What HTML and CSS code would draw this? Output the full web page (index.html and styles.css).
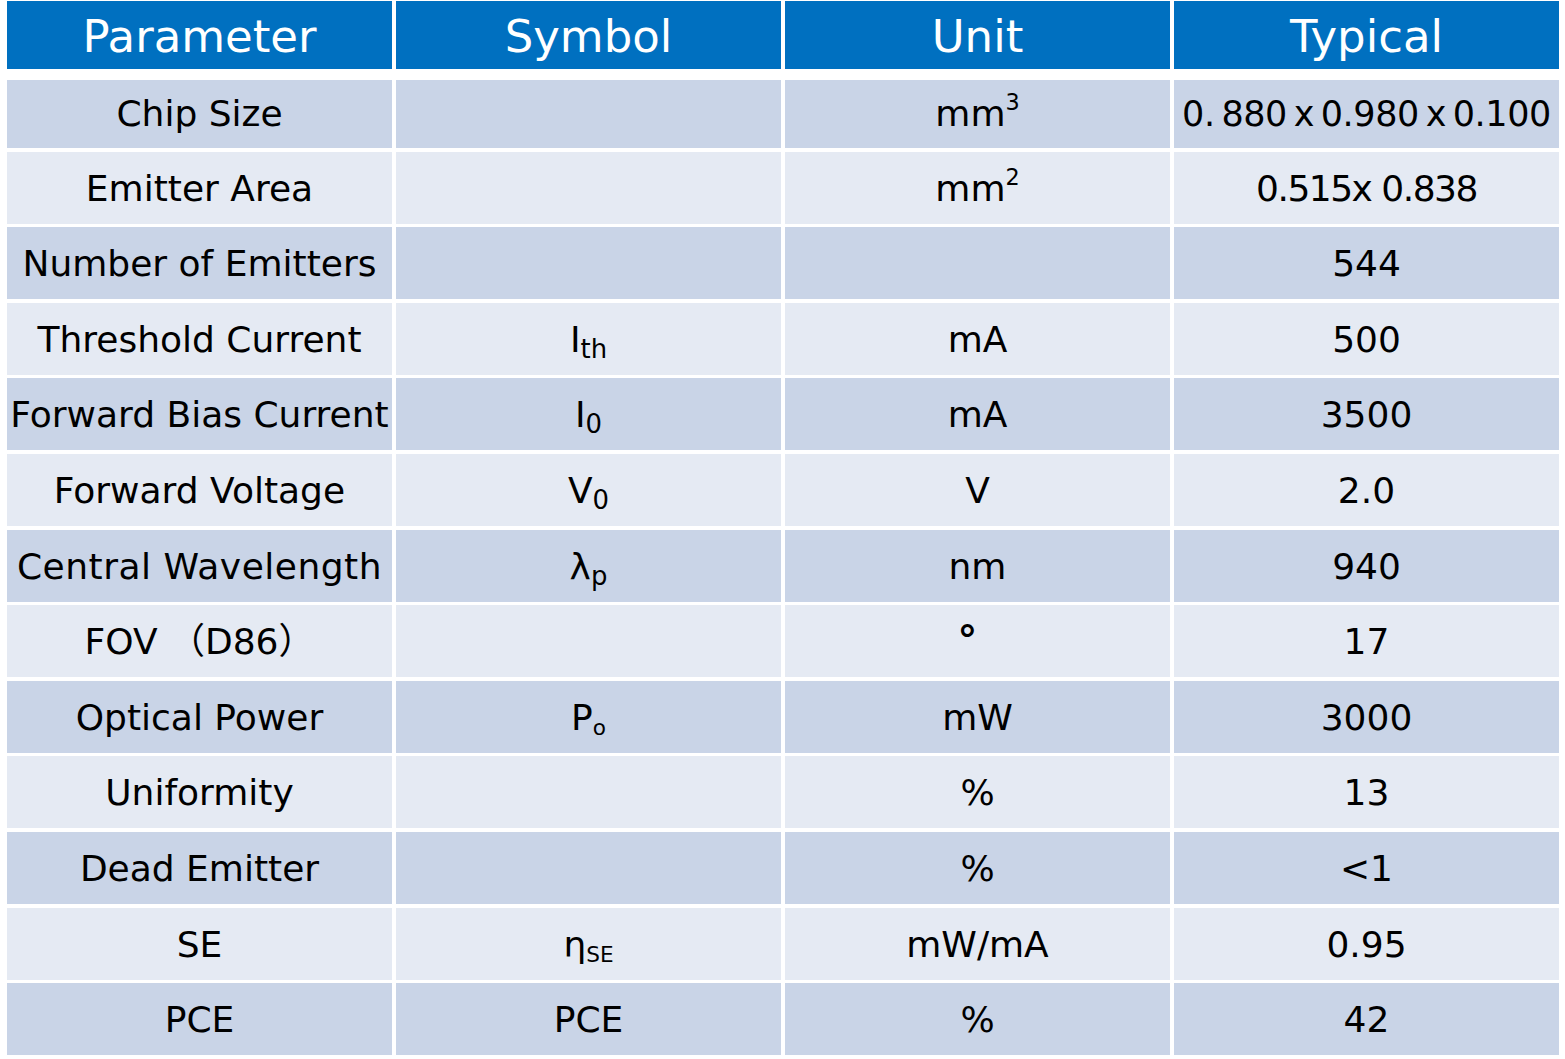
FILE: index.html
```html
<!DOCTYPE html>
<html>
<head>
<meta charset="utf-8">
<link rel="stylesheet" href="styles.css">
</head>
<body>
<div class="spec">
  <div class="row head">
    <div class="cell">Parameter</div>
    <div class="cell">Symbol</div>
    <div class="cell">Unit</div>
    <div class="cell">Typical</div>
  </div>
  <div class="row dark first">
    <div class="cell">Chip Size</div>
    <div class="cell"></div>
    <div class="cell">mm<sup>3</sup></div>
    <div class="cell tight">0. 880 x 0.980 x 0.100</div>
  </div>
  <div class="row light">
    <div class="cell">Emitter Area</div>
    <div class="cell"></div>
    <div class="cell">mm<sup>2</sup></div>
    <div class="cell narrow">0.515x 0.838</div>
  </div>
  <div class="row dark">
    <div class="cell">Number of Emitters</div>
    <div class="cell"></div>
    <div class="cell"></div>
    <div class="cell">544</div>
  </div>
  <div class="row light">
    <div class="cell">Threshold Current</div>
    <div class="cell">I<sub>th</sub></div>
    <div class="cell">mA</div>
    <div class="cell">500</div>
  </div>
  <div class="row dark">
    <div class="cell">Forward Bias Current</div>
    <div class="cell">I<sub>0</sub></div>
    <div class="cell">mA</div>
    <div class="cell">3500</div>
  </div>
  <div class="row light">
    <div class="cell">Forward Voltage</div>
    <div class="cell">V<sub>0</sub></div>
    <div class="cell">V</div>
    <div class="cell">2.0</div>
  </div>
  <div class="row dark">
    <div class="cell wide">Central Wavelength</div>
    <div class="cell">λ<sub>p</sub></div>
    <div class="cell">nm</div>
    <div class="cell">940</div>
  </div>
  <div class="row light">
    <div class="cell">FOV （D86）</div>
    <div class="cell"></div>
    <div class="cell"><span class="deg">°</span></div>
    <div class="cell">17</div>
  </div>
  <div class="row dark">
    <div class="cell">Optical Power</div>
    <div class="cell">P<sub class="small">o</sub></div>
    <div class="cell">mW</div>
    <div class="cell">3000</div>
  </div>
  <div class="row light">
    <div class="cell">Uniformity</div>
    <div class="cell"></div>
    <div class="cell">%</div>
    <div class="cell">13</div>
  </div>
  <div class="row dark">
    <div class="cell">Dead Emitter</div>
    <div class="cell"></div>
    <div class="cell">%</div>
    <div class="cell">&lt;1</div>
  </div>
  <div class="row light">
    <div class="cell">SE</div>
    <div class="cell">η<sub class="small">SE</sub></div>
    <div class="cell">mW/mA</div>
    <div class="cell">0.95</div>
  </div>
  <div class="row dark">
    <div class="cell">PCE</div>
    <div class="cell">PCE</div>
    <div class="cell">%</div>
    <div class="cell">42</div>
  </div>
</div>
</body>
</html>
```

FILE: styles.css
```css
html, body {
  margin: 0;
  padding: 0;
  background: #ffffff;
}

body {
  font-family: "DejaVu Sans", "Noto Sans CJK SC", sans-serif;
  color: #000000;
}

.spec {
  width: 1552px;
  padding: 1px 0 0 7px;
  display: flex;
  flex-direction: column;
  gap: 3.6px;
}

.row {
  display: grid;
  grid-template-columns: repeat(4, 1fr);
  column-gap: 4px;
  height: 72px;
}

.row.head {
  height: 68px;
  margin-bottom: 7.4px;
}

.row.first {
  height: 68px;
}

.cell {
  box-sizing: border-box;
  height: 100%;
  overflow: hidden;
  text-align: center;
  white-space: nowrap;
  font-size: 36px;
  padding-top: 2px;
  line-height: 70px;
}

.first .cell {
  padding-top: 0;
  line-height: 68px;
}

.head .cell {
  background: #0070c0;
  color: #ffffff;
  font-size: 45px;
  padding-top: 4px;
  line-height: 64px;
}

.dark .cell {
  background: #c9d4e7;
}

.light .cell {
  background: #e5eaf3;
}

.tight {
  font-size: 35px;
  word-spacing: -4px;
  letter-spacing: -0.4px;
}

.narrow {
  letter-spacing: -1.5px;
}

.wide {
  letter-spacing: 0.5px;
}

sup {
  font-size: 0.62em;
  vertical-align: 0.72em;
  line-height: 0;
}

sub {
  font-size: 0.72em;
  vertical-align: -0.22em;
  line-height: 0;
}

sub.small {
  font-size: 0.6em;
  vertical-align: -0.25em;
}

.deg {
  display: inline-block;
  font-size: 1.1em;
  font-weight: bold;
  transform: translate(-10px, -2px);
}
```
